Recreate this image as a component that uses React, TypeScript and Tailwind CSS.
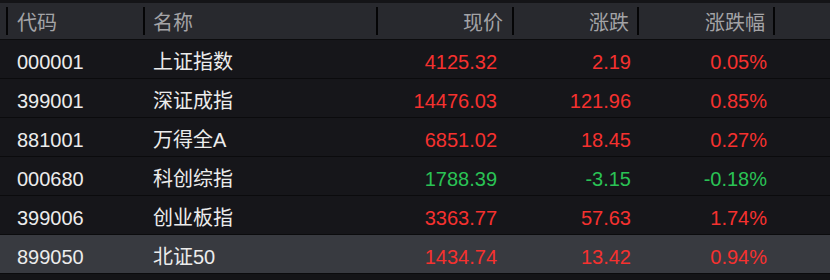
import React from "react";

type Row = { code: string; name: string; price: string; chg: string; pct: string; up: boolean };

const rows: Row[] = [
  { code: "000001", name: "上证指数", price: "4125.32", chg: "2.19", pct: "0.05%", up: true },
  { code: "399001", name: "深证成指", price: "14476.03", chg: "121.96", pct: "0.85%", up: true },
  { code: "881001", name: "万得全A", price: "6851.02", chg: "18.45", pct: "0.27%", up: true },
  { code: "000680", name: "科创综指", price: "1788.39", chg: "-3.15", pct: "-0.18%", up: false },
  { code: "399006", name: "创业板指", price: "3363.77", chg: "57.63", pct: "1.74%", up: true },
  { code: "899050", name: "北证50", price: "1434.74", chg: "13.42", pct: "0.94%", up: true },
];

const Divider = () => <div className="w-[2px] h-[28px] bg-[#050506]" />;

export default function App() {
  return (
    <div
      className="w-[830px] h-[280px] bg-[#141417] pt-[3px] overflow-hidden"
      style={{ fontFamily: '"Liberation Sans", "Noto Sans CJK SC", sans-serif' }}
    >
      <div className="h-[37px] bg-[#28292e] flex items-center text-[20px] text-[#a3a3a6] border-b border-[#0c0c0e]">
        <div className="w-[6px]" />
        <Divider />
        <div className="w-[135px] pl-[9px] pt-[3px]">代码</div>
        <Divider />
        <div className="w-[231px] pl-[8px] pt-[3px]">名称</div>
        <Divider />
        <div className="w-[134px] text-right pr-[9px] pt-[3px]">现价</div>
        <Divider />
        <div className="w-[123px] text-right pr-[8px] pt-[3px]">涨跌</div>
        <Divider />
        <div className="w-[134px] text-right pr-[8px] pt-[3px]">涨跌幅</div>
        <Divider />
      </div>
      {rows.map((r, i) => {
        const color = r.up ? "text-[#f5312f]" : "text-[#2ac255]";
        const last = i === rows.length - 1;
        return (
          <div
            key={r.code}
            className={`h-[39px] pt-[6px] flex items-center text-[20px] border-b border-[#0b0b0d] ${
              last ? "bg-[#383a40]" : "bg-[#16161a]"
            }`}
          >
            <div className="w-[153px] pl-[17px] text-[#ececec]">{r.code}</div>
            <div className="w-[225px] text-[#ececec]">{r.name}</div>
            <div className={`w-[119px] text-right ${color}`}>{r.price}</div>
            <div className={`w-[134px] text-right ${color}`}>{r.chg}</div>
            <div className={`w-[136px] text-right ${color}`}>{r.pct}</div>
          </div>
        );
      })}
    </div>
  );
}
